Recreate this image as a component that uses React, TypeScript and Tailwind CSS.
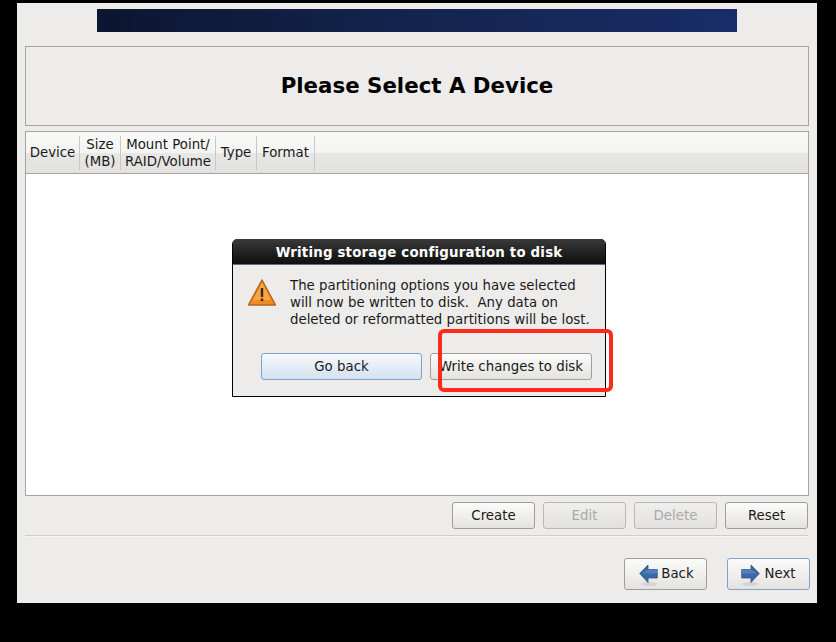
import React from 'react';

const btnBase =
  'w-[83px] h-[27px] rounded-[3px] border bg-gradient-to-b flex items-center justify-center';
const btn = `${btnBase} border-[#a09e99] from-[#fbfbfa] to-[#e4e3e0] text-[#1a1a1a]`;
const btnOff = `${btnBase} border-[#b9b8b4] from-[#efefed] to-[#e2e1df] text-[#aaa9a6]`;

const Arrow = ({ left }: { left?: boolean }) => (
  <svg width="19" height="24" viewBox="0 0 19 24" className={left ? 'mt-[1px]' : '-scale-x-100 mt-[1px]'}>
    <ellipse cx="10" cy="21" rx="8" ry="2" fill="#d6d5d2" />
    <path d="M0.7 10.5 L9 2 V6.5 H18.3 V15 H9 V19.5 Z" fill="#3a69a6" stroke="#2d5790" strokeWidth="0.8" strokeLinejoin="round" />
    <path d="M9 6.5 H18.3 V10.5 H3 Z" fill="#5f8dc4" opacity="0.65" />
  </svg>
);

const Col = ({ children, className }: { children: React.ReactNode; className: string }) => (
  <div className={`h-[34px] flex items-center justify-center text-center leading-[17px] border-r border-[#c9c8c4] ${className}`}>
    {children}
  </div>
);

export default function App() {
  return (
    <div className="relative w-[836px] h-[642px] bg-black font-['DejaVu_Sans',sans-serif] text-[13.33px] text-[#1a1a1a] pt-[3px] pl-[17px]">
      <div className="w-[800px] h-[600px] bg-[#edecea] px-[8px] pt-[6px]">
        <div className="mx-[72px] h-[23px] bg-gradient-to-r from-[#0b1630] via-[#14244f] to-[#182d68]" />
        <div className="mt-[14px] h-[80px] border border-[#a5a4a0] flex items-center justify-center text-[21.33px] font-bold text-black">
          Please Select A Device
        </div>
        <div className="mt-[5px] h-[365px] border border-[#a5a4a0] bg-white flex flex-col">
          <div className="h-[42px] border-b border-[#a5a4a0] bg-[linear-gradient(to_bottom,#f9f9f8_0%,#f4f4f3_50%,#e8e7e5_52%,#e3e2e0_100%)] flex items-center">
            <Col className="w-[54px]">Device</Col>
            <Col className="w-[41px]">Size<br />(MB)</Col>
            <Col className="w-[95px]">Mount Point/<br />RAID/Volume</Col>
            <Col className="w-[41px]">Type</Col>
            <Col className="w-[58px]">Format</Col>
          </div>
          <div className="flex-1" />
        </div>
        <div className="mt-[6px] flex justify-end gap-[8px] mr-[1px]">
          <div className={btn}>Create</div>
          <div className={btnOff}>Edit</div>
          <div className={btnOff}>Delete</div>
          <div className={btn}>Reset</div>
        </div>
        <div className="mt-[6px] h-[2px] border-t border-[#cfcec9] bg-[#f6f5f4] mr-[1px]" />
        <div className="mt-[21px] flex justify-end gap-[20px] mr-[-1px]">
          <div className={`${btn} !h-[32px] gap-[3px] pl-[2px]`}>
            <Arrow left />
            Back
          </div>
          <div className={`${btn} !h-[32px] gap-[4px] !border-[#7da2ce]`}>
            <Arrow />
            Next
          </div>
        </div>
      </div>

      <div className="absolute left-[232px] top-[239px] w-[374px] h-[158px] border border-black rounded-t-[5px] bg-[#edecea] flex flex-col">
        <div className="h-[26px] -mt-px pt-[2px] rounded-t-[5px] bg-gradient-to-b from-[#3a3a3a] to-[#0f0f0f] flex items-center justify-center text-white font-bold tracking-[0.2px] border-b border-[#5b6f8c]">
          Writing storage configuration to disk
        </div>
        <div className="flex pl-[14px] pt-[12px]">
          <svg width="30" height="30" viewBox="0 0 30 30" className="mt-[1px] shrink-0">
            <path d="M15 2 L28.5 27 H1.5 Z" fill="#f08a24" stroke="#b5651d" strokeWidth="1.5" strokeLinejoin="round" />
            <path d="M15 5 L24 22 H6 Z" fill="#f6a645" />
            <rect x="13.8" y="10" width="2.4" height="9" fill="#3a2a10" />
            <rect x="13.8" y="20.5" width="2.4" height="2.6" fill="#3a2a10" />
          </svg>
          <div className="ml-[13px] whitespace-pre leading-[17px]">
            {'The partitioning options you have selected\nwill now be written to disk.  Any data on\ndeleted or reformatted partitions will be lost.'}
          </div>
        </div>
        <div className="mt-[25px] pl-[28px] flex gap-[8px]">
          <div className={`${btnBase} !w-[161px] border-[#7da2ce] from-[#f5f8fc] to-[#d5e1f0] text-[#1a1a1a]`}>Go back</div>
          <div className={`${btn} !w-[162px] whitespace-nowrap`}>Write changes to disk</div>
        </div>
      </div>

      <div className="absolute left-[438px] top-[329px] w-[175px] h-[63px] border-[4px] border-[#ff2a1a] rounded-[6px]" />
    </div>
  );
}
